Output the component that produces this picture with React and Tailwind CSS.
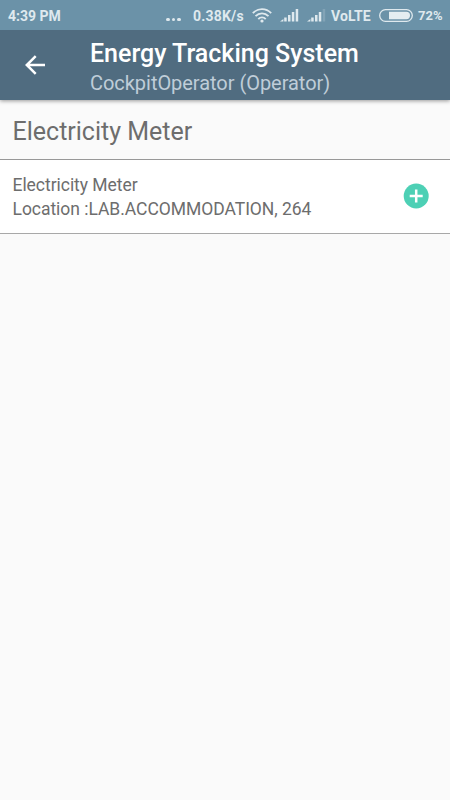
const meters = [
  { id: 1, name: 'Electricity Meter', location: 'LAB.ACCOMMODATION, 264' },
];

const WifiIcon = () => (
  <svg width="20" height="15" viewBox="0 0 20 15" fill="none" stroke="#dfe9ee" strokeWidth="1.8" className="-mt-0.5 shrink-0">
    <path d="M0.8 5.2C6 -0.2 14 -0.2 19.2 5.2" />
    <path d="M3.5 8.2C7.2 4.3 12.8 4.3 16.5 8.2" />
    <path d="M6.3 11.1C8.4 8.7 11.6 8.7 13.7 11.1" />
    <circle cx="10" cy="13" r="1.6" fill="#dfe9ee" stroke="none" />
  </svg>
);

const SignalIcon = ({ weak }) => (
  <svg width="19" height="14" viewBox="0 0 19 14" fill="#dfe9ee" className="shrink-0">
    <path d="M0 13.5L3.4 11V13.5Z" />
    <rect x="4.2" y="9.5" width="2.5" height="4" />
    <rect x="8" y="7" width="2.5" height="6.5" />
    <rect x="11.8" y="4" width="2.5" height="9.5" />
    <rect x="15.7" y="1" width="2.5" height="12.5" opacity={weak ? 0.2 : 1} />
  </svg>
);

const BatteryIcon = () => (
  <svg width="34" height="13" viewBox="0 0 34 13" className="-mt-0.5 shrink-0">
    <rect x="0.7" y="0.7" width="32.6" height="11.6" rx="5.8" fill="none" stroke="#dfe9ee" strokeWidth="1.3" />
    <path d="M10 2.8H27.3A3.7 3.7 0 0 1 27.3 10.2H10Z" fill="#e4edf1" />
  </svg>
);

const StatusBar = () => (
  <div className="relative z-10 flex h-[30px] items-center bg-[#6b92a8] pl-2 pt-0.5 text-[14px] font-bold leading-none text-[#dfe9ee]">
    <span className="w-[54px] whitespace-nowrap">4:39 PM</span>
    <div className="ml-[104px] mt-[7px] flex gap-[2px]">
      <span className="size-[3.5px] rounded-full bg-[#dfe9ee]" />
      <span className="size-[3.5px] rounded-full bg-[#dfe9ee]" />
      <span className="size-[3.5px] rounded-full bg-[#dfe9ee]" />
    </div>
    <span className="ml-[12.5px] w-[59px] whitespace-nowrap tracking-[0.2px]">0.38K/s</span>
    <WifiIcon />
    <div className="-mt-0.5 ml-2 flex gap-2">
      <SignalIcon />
      <SignalIcon weak />
    </div>
    <span className="ml-[5px] w-[48px] whitespace-nowrap tracking-[0.1px]">VoLTE</span>
    <BatteryIcon />
    <span className="-mt-px ml-[5px] text-[13px]">72%</span>
  </div>
);

const Appbar = () => (
  <header className="relative flex h-[70px] bg-[#506c80] shadow-[0_1px_4px_rgba(0,0,0,0.4)]">
    <button className="flex w-[90px] items-center pl-[25px]" aria-label="Back">
      <svg width="20" height="20" viewBox="0 0 20 20" fill="none" stroke="#fff" strokeWidth="2.5">
        <path d="M20 10H2M10.7 1.2L1.8 10L10.7 18.8" />
      </svg>
    </button>
    <div className="whitespace-nowrap pt-[9px]">
      <h1 className="text-[25px] font-medium leading-[30px] text-white">Energy Tracking System</h1>
      <p className="text-[20px] leading-[28px] tracking-[-0.04px] text-[#bfcdd8]">CockpitOperator (Operator)</p>
    </div>
  </header>
);

export default function App() {
  return (
    <div className="flex h-screen flex-col bg-[#fafafa] font-['Roboto',sans-serif] text-[#6d6d6d]">
      <StatusBar />
      <Appbar />
      <h2 className="h-[59px] pl-[12.5px] pt-[17px] text-[25px] leading-[30px]">Electricity Meter</h2>
      <ul className="border-t border-[#989898]">
        {meters.map((meter) => (
          <li key={meter.id} className="flex h-[74px] items-center justify-between border-b border-[#a8a8a8] bg-white pl-[12.5px] pr-[21px]">
            <div className="pt-px text-[17.5px] leading-6 tracking-[-0.04px]">
              <p>{meter.name}</p>
              <p>Location :{meter.location}</p>
            </div>
            <button className="-mt-px" aria-label="Add reading">
              <svg width="26" height="26" viewBox="0 0 26 26">
                <circle cx="13.2" cy="13" r="12.5" fill="#4dd0b5" />
                <path d="M13.2 6.5V19.5M6.7 13H19.7" stroke="#fff" strokeWidth="2.5" />
              </svg>
            </button>
          </li>
        ))}
      </ul>
    </div>
  );
}
